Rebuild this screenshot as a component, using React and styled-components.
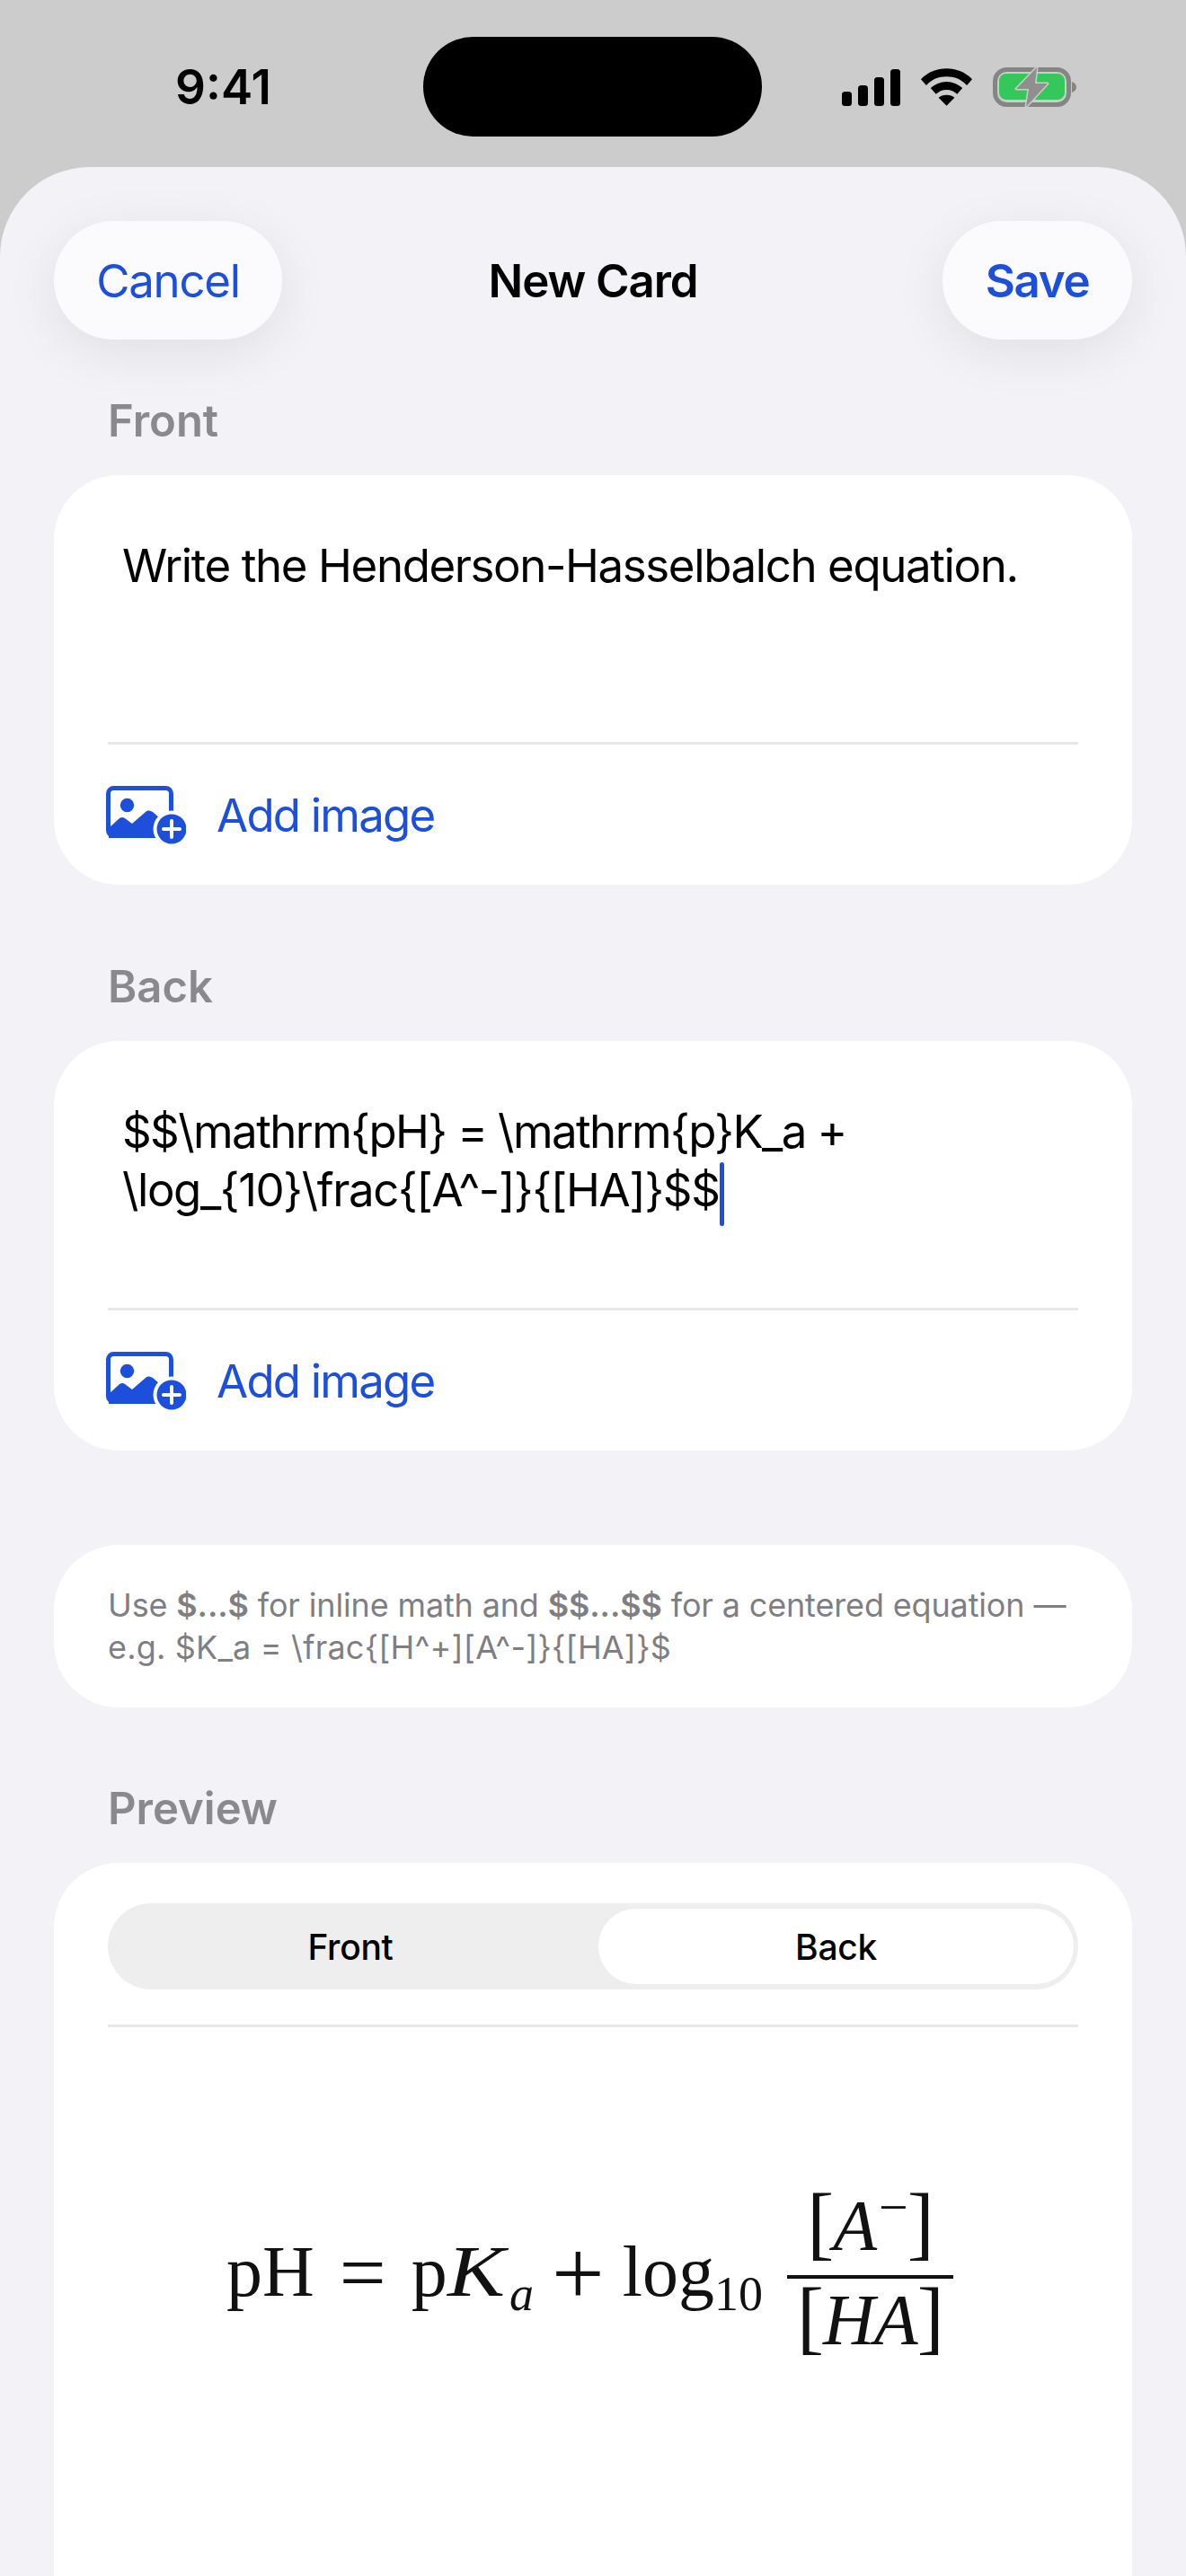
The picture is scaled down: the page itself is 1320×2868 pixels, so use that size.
import React from 'react';
import styled, { createGlobalStyle } from 'styled-components';

const GlobalStyle = createGlobalStyle`
  html, body { margin: 0; padding: 0; background: #cccccc; }
  body { width: 1320px; height: 2868px; overflow: hidden; font-family: Inter, "Liberation Sans", sans-serif; }
`;

const Screen = styled.div`
  width: 1320px;
  height: 2868px;
  background: #cccccc;
  overflow: hidden;
`;

const StatusBar = styled.div`
  height: 186px;
  display: flex;
  align-items: flex-start;
`;

const Clock = styled.div`
  width: 227px;
  margin: 67px 0 0 135px;
  text-align: center;
  font-size: 53px;
  line-height: 60px;
  font-weight: 600;
  color: #000;
`;

const Island = styled.div`
  width: 377px;
  height: 111px;
  margin: 41px 0 0 109px;
  border-radius: 56px;
  background: #000;
`;

const StatusIcons = styled.div`
  display: flex;
  align-items: center;
  gap: 23px;
  margin: 74px 0 0 89px;
  height: 46px;
`;

const Sheet = styled.div`
  height: 2682px;
  background: #f2f2f7;
  border-radius: 100px 100px 0 0;
  padding: 60px 60px 0;
  box-sizing: border-box;
  overflow: hidden;
`;

const NavBar = styled.div`
  display: grid;
  grid-template-columns: 1fr auto 1fr;
  align-items: center;
  height: 132px;
`;

const NavButton = styled.div`
  height: 132px;
  width: ${({ $width }) => $width}px;
  justify-self: ${({ $end }) => ($end ? 'end' : 'start')};
  border-radius: 66px;
  background: #fbfbfe;
  box-shadow: 0 14px 60px rgba(0, 0, 0, 0.08);
  display: flex;
  align-items: center;
  justify-content: center;
  color: #1c4fdc;
  font-size: 51px;
  letter-spacing: -1.3px;
  font-weight: ${({ $bold }) => ($bold ? 600 : 400)};
`;

const NavTitle = styled.div`
  font-size: 51px;
  letter-spacing: -1.1px;
  font-weight: 600;
  color: #000;
`;

const SectionLabel = styled.div`
  margin: ${({ $top }) => $top}px 0 0 60px;
  font-size: 49px;
  line-height: 60px;
  font-weight: 600;
  color: #8a8a8e;
`;

const Card = styled.div`
  margin-top: 30px;
  width: 1200px;
  background: #fff;
  border-radius: 72px;
  padding: 60px 60px 0;
  box-sizing: border-box;
`;

const Editor = styled.div`
  height: 237px;
  padding: 8px 0 0 16px;
  box-sizing: border-box;
  font-size: 51px;
  line-height: 65px;
  letter-spacing: -1.4px;
  color: #000;
`;

const TightLine = styled.span`
  letter-spacing: -1.6px;
`;

const Caret = styled.span`
  display: inline-block;
  width: 5px;
  height: 71px;
  margin: -6px 0 -6px 1px;
  vertical-align: -16px;
  border-radius: 3px;
  background: #1c4fdc;
`;

const Divider = styled.div`
  height: 3px;
  margin-top: ${({ $top }) => $top || 0}px;
  background: #e8e8ea;
`;

const AddRow = styled.div`
  height: 156px;
  display: flex;
  align-items: center;
  gap: 34px;
  margin-left: -2px;
  color: #1c4fdc;
  font-size: 51px;
  letter-spacing: -1.8px;
`;

const HintCard = styled.div`
  margin-top: 105px;
  width: 1200px;
  height: 181px;
  background: #fff;
  border-radius: 72px;
  padding: 44px 60px 0;
  box-sizing: border-box;
  font-size: 36px;
  line-height: 47px;
  letter-spacing: -0.15px;
  color: #7f7f83;
  b { font-weight: 600; }
`;

const HintExample = styled.span`
  letter-spacing: 0.18px;
`;

const PreviewCard = styled(Card)`
  height: 900px;
  padding-top: 45px;
`;

const Segments = styled.div`
  height: 96px;
  border-radius: 48px;
  background: #eeeeef;
  display: grid;
  grid-template-columns: 540px 529px;
  column-gap: 6px;
  padding: 6px 0;
  box-sizing: border-box;
`;

const Segment = styled.div`
  display: flex;
  align-items: center;
  justify-content: center;
  border-radius: 42px;
  font-size: 39px;
  letter-spacing: -0.3px;
  font-weight: 500;
  color: #000;
  background: ${({ $active }) => ($active ? '#fff' : 'transparent')};
`;

const Formula = styled.div`
  height: 562px;
  display: flex;
  align-items: center;
  padding-left: 132px;
  font-family: "Liberation Serif", serif;
  font-size: 80px;
  color: #111;
  white-space: nowrap;
`;

const MathRow = styled.div`
  padding-bottom: 18px;
`;

const MathOp = styled.span`
  font-size: ${({ $size }) => $size}px;
  margin: 0 ${({ $gap }) => $gap}px;
  line-height: 0;
  vertical-align: ${({ $drop }) => -$drop}px;
`;

const Italic = styled.i`
  font-style: italic;
  margin-right: ${({ $after }) => $after || 0}px;
`;

const WideK = styled.i`
  display: inline-block;
  font-style: italic;
  margin-right: 16px;
  transform: scaleX(1.2);
  transform-origin: left center;
`;

const Sub = styled.span`
  font-size: 54px;
  line-height: 0;
  vertical-align: -16px;
`;

const Fraction = styled.div`
  display: flex;
  flex-direction: column;
  align-items: center;
  width: 185px;
  margin-left: 27px;
`;

const FracPart = styled.div`
  line-height: 92px;
  padding-bottom: ${({ $bottom }) => $bottom}px;
  letter-spacing: -1px;
`;

const FracLine = styled.div`
  align-self: stretch;
  height: 4px;
  background: #111;
`;

const Bracket = styled.span`
  font-size: 90px;
  line-height: 0;
`;

const Sup = styled.span`
  font-size: 58px;
  line-height: 0;
  vertical-align: 28px;
`;

const SignalIcon = () => (
  <svg width="65" height="41" viewBox="0 0 65 41" fill="#000">
    <rect x="0" y="25" width="11" height="16" rx="3.5" />
    <rect x="18" y="18" width="11" height="23" rx="3.5" />
    <rect x="36" y="9" width="11" height="32" rx="3.5" />
    <rect x="54" y="0" width="11" height="41" rx="3.5" />
  </svg>
);

const WifiIcon = () => (
  <svg width="57" height="42" viewBox="0 0 58 42" fill="#000">
    <path d="M29 0C18 0 8 4 0 12l6 7C12 12 20 9 29 9s17 3 23 10l6-7C50 4 40 0 29 0z" />
    <path d="M29 15c-7 0-13 3-18 7l6 7c3-3 7-5 12-5s9 2 12 5l6-7c-5-4-11-7-18-7z" />
    <path d="M29 30c-4 0-7 1-9 3l9 9 9-9c-2-2-5-3-9-3z" />
  </svg>
);

const BatteryIcon = () => (
  <svg width="94" height="46" viewBox="0 0 94 46">
    <rect x="2.5" y="3.5" width="82" height="39" rx="13" fill="none" stroke="#858585" strokeWidth="5" />
    <rect x="7" y="8" width="73" height="29" rx="8" fill="#34c759" />
    <path d="M88 17c3 1 5 3 5 6s-2 5-5 6z" fill="#858585" />
    <path d="M49 1 26 25h14l-3 20 24-26H47z" fill="#8f8f8f" stroke="#cccccc" strokeWidth="3" strokeLinejoin="round" paintOrder="stroke" />
  </svg>
);

const AddImageIcon = () => (
  <svg width="89" height="65" viewBox="0 0 89 65">
    <rect x="2.5" y="2.5" width="70" height="53" rx="6" fill="none" stroke="#1c4fdc" strokeWidth="5" />
    <circle cx="23.5" cy="21.5" r="7.7" fill="#1c4fdc" />
    <path d="M3 47 15 36c2-1.500 4-1.500 6 0l8 6 15-13c2-2 5-2 8 0l8 7v22H3z" fill="#1c4fdc" />
    <circle cx="73" cy="48" r="20.500" fill="#fff" />
    <circle cx="73" cy="48" r="16.500" fill="#1c4fdc" />
    <path d="M73 39v18M64 48h18" stroke="#fff" strokeWidth="4" strokeLinecap="round" />
  </svg>
);

const AddImage = () => (
  <AddRow>
    <AddImageIcon />
    Add image
  </AddRow>
);

export default function App() {
  return (
    <Screen>
      <GlobalStyle />
      <StatusBar>
        <Clock>9:41</Clock>
        <Island />
        <StatusIcons>
          <SignalIcon />
          <WifiIcon />
          <BatteryIcon />
        </StatusIcons>
      </StatusBar>
      <Sheet>
        <NavBar>
          <NavButton $width={254}>Cancel</NavButton>
          <NavTitle>New Card</NavTitle>
          <NavButton $width={211} $end $bold>Save</NavButton>
        </NavBar>
        <SectionLabel $top={61}>Front</SectionLabel>
        <Card>
          <Editor>Write the Henderson-Hasselbalch equation.</Editor>
          <Divider />
          <AddImage />
        </Card>
        <SectionLabel $top={84}>Back</SectionLabel>
        <Card>
          <Editor>
            <TightLine>$$\mathrm{'{pH}'} = \mathrm{'{p}'}K_a +</TightLine><br />
            \log_{'{10}'}\frac{'{[A^-]}{[HA]}'}$$<Caret />
          </Editor>
          <Divider />
          <AddImage />
        </Card>
        <HintCard>
          Use <b>$...$</b> for inline math and <b>$$...$$</b> for a centered equation —<br />
          <HintExample>e.g. $K_a = \frac{'{[H^+][A^-]}{[HA]}'}$</HintExample>
        </HintCard>
        <SectionLabel $top={83}>Preview</SectionLabel>
        <PreviewCard>
          <Segments>
            <Segment>Front</Segment>
            <Segment $active>Back</Segment>
          </Segments>
          <Divider $top={39} />
          <Formula>
            <MathRow>
              pH<MathOp $size={92} $gap={28} $drop={5}>=</MathOp>p<WideK>K</WideK><Sub><Italic>a</Italic></Sub>
              <MathOp $size={104} $gap={20} $drop={10}>+</MathOp>log<Sub>10</Sub>
            </MathRow>
            <Fraction>
              <FracPart $bottom={9}><Bracket>[</Bracket><Italic $after={3}>A</Italic><Sup>−</Sup><Bracket>]</Bracket></FracPart>
              <FracLine />
              <FracPart $bottom={16}><Bracket>[</Bracket><Italic>HA</Italic><Bracket>]</Bracket></FracPart>
            </Fraction>
          </Formula>
        </PreviewCard>
      </Sheet>
    </Screen>
  );
}
